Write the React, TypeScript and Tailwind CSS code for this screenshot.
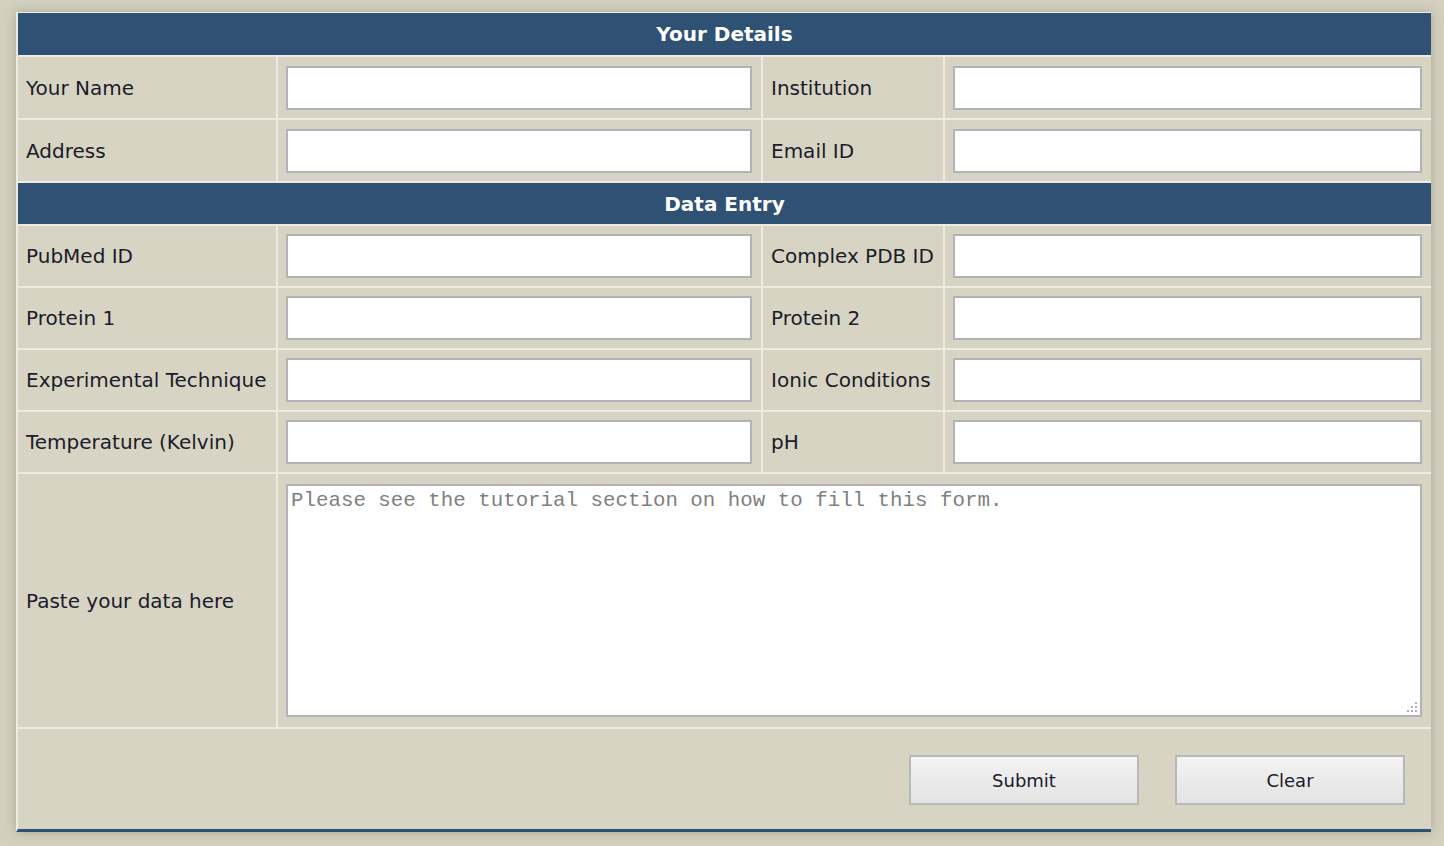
import React from "react";

const labelCls =
   "flex items-center pl-[8px] bg-[#d8d4c3] text-[20px] text-[#1b1b2b] whitespace-nowrap";
const inputCellCls = "flex items-center pl-[8px] pr-[9px] bg-[#d8d4c3]";
const inputCls =
   "w-full h-[44px] bg-white border-2 border-[#b3b2b8] outline-none px-2 text-[18px]";
const headerCls =
   "col-span-4 flex items-center justify-center bg-[#2f5274] text-white font-bold text-[20px]";
const btnCls =
   "w-[230px] h-[50px] border-2 border-[#b8b8b8] bg-gradient-to-b from-[#f3f3f3] to-[#e3e3e3] text-[18px] text-[#1b1b2b]";

function FieldRow({ left, right }: { left: string; right: string }) {
   return (
      <>
         <div className={labelCls}>{left}</div>
         <div className={inputCellCls}>
            <input className={inputCls} />
         </div>
         <div className={labelCls}>{right}</div>
         <div className={inputCellCls}>
            <input className={inputCls} />
         </div>
      </>
   );
}

export default function App() {
   return (
      <div
         className="w-[1444px] h-[846px] bg-[#d3d0bf] pt-[12px] pl-[16px]"
         style={{ fontFamily: '"DejaVu Sans", Verdana, sans-serif' }}>
         <div className="w-[1415px] border-l-2 border-t border-[#eeebe2] border-b-[3px] border-b-[#2e5274] shadow-[0_0_10px_rgba(120,115,95,0.45)]">
            <div className="grid grid-cols-[258px_483px_180px_1fr] grid-rows-[42px_61px_61px_41px_60px_60px_60px_60px_253px_100px] gap-[2px] bg-[#eeebe2]">
               <div className={headerCls}>Your Details</div>
               <FieldRow left="Your Name" right="Institution" />
               <FieldRow left="Address" right="Email ID" />
               <div className={headerCls}>Data Entry</div>
               <FieldRow left="PubMed ID" right="Complex PDB ID" />
               <FieldRow left="Protein 1" right="Protein 2" />
               <FieldRow left="Experimental Technique" right="Ionic Conditions" />
               <FieldRow left="Temperature (Kelvin)" right="pH" />

               <div className={labelCls}>Paste your data here</div>
               <div className="col-span-3 bg-[#d8d4c3] pt-[10px] pb-[10px] pl-[8px] pr-[9px]">
                  <div className="relative w-full h-full">
                     <textarea
                        className="block w-full h-full bg-white border-2 border-[#b3b2b8] outline-none resize-none px-[3px] pt-[2px] text-[20.8px] leading-[26px] text-[#333] placeholder:text-[#808080]"
                        style={{ fontFamily: '"Liberation Mono", "Courier New", monospace' }}
                        placeholder="Please see the tutorial section on how to fill this form."
                     />
                     {/* resize grip */}
                     <svg
                        className="absolute right-[4px] bottom-[4px]"
                        width="12"
                        height="12"
                        viewBox="0 0 12 12">
                        <g fill="#b0b0b0">
                           <rect x="9" y="1" width="2" height="2" />
                           <rect x="5" y="5" width="2" height="2" />
                           <rect x="9" y="5" width="2" height="2" />
                           <rect x="1" y="9" width="2" height="2" />
                           <rect x="5" y="9" width="2" height="2" />
                           <rect x="9" y="9" width="2" height="2" />
                        </g>
                     </svg>
                  </div>
               </div>

               <div className="col-span-4 bg-[#d8d4c3] flex items-center justify-end gap-[36px] pr-[26px] pt-[2px]">
                  <button className={btnCls}>Submit</button>
                  <button className={btnCls}>Clear</button>
               </div>
            </div>
         </div>
      </div>
   );
}
